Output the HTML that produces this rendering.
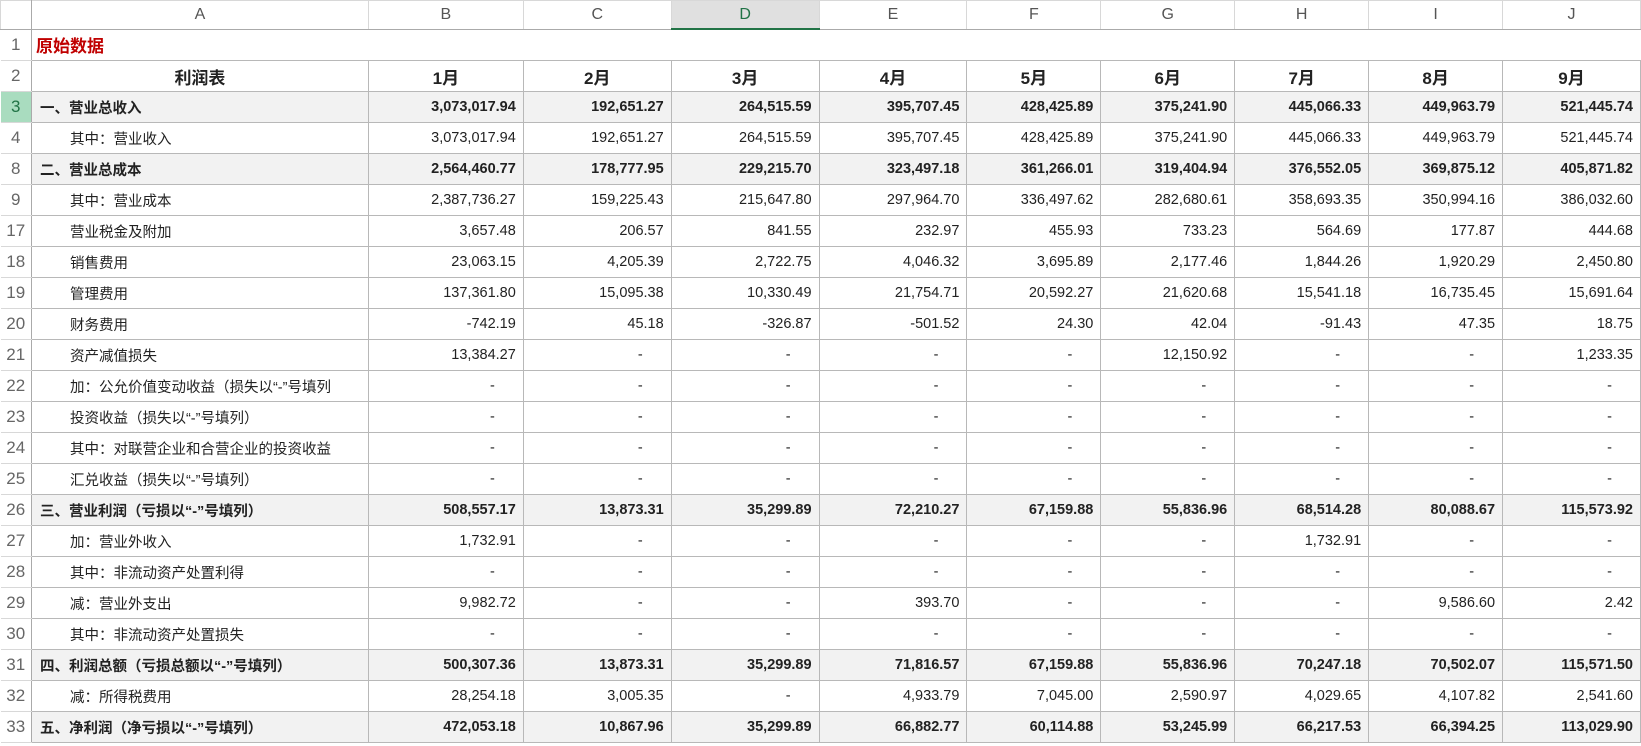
<!DOCTYPE html>
<html><head><meta charset="utf-8"><style>
body{margin:0;background:#fff;width:1641px;height:746px;overflow:hidden;font-family:"Liberation Sans","Noto Sans CJK SC",sans-serif;}
table{border-collapse:collapse;table-layout:fixed;position:absolute;left:0;top:0;}
td{height:30px;padding:0 7px 0 0;border:1px solid #b8b8b8;text-align:right;font-size:14.5px;color:#222;white-space:nowrap;overflow:hidden;}
tr.h td{height:27px;background:#fff;color:#555;text-align:center;font-size:16px;border:1px solid #d8d8d8;border-bottom:1px solid #aaa;padding:0;}
tr.h td.sel{background:#e0e0e0;border-bottom:2px solid #217346;color:#217346}
td.r{text-align:center;color:#666;font-size:17px;padding:0;border-left:none;border-color:#d8d8d8;border-right:1px solid #aaa;}
td.a{text-align:left;padding-left:38px;}
tr.b td{background:#f2f2f2;font-weight:bold;}
tr.b td.a{padding-left:8px;}
tr.b td.r{background:#fff;font-weight:normal}
td.d{padding-right:28px;}
tr.t td{border:none;border-bottom:1px solid #b8b8b8}
tr.t td.r{border-right:1px solid #aaa;border-bottom:1px solid #d8d8d8}
tr.m td{font-weight:bold;text-align:center;font-size:17px;padding:0}
tr.m td.r{font-weight:normal}
tr.g td.r{background:#a9dcbf;color:#217346}
</style></head><body>
<table>
<colgroup><col style="width:31px"><col style="width:337px"><col style="width:155px"><col style="width:148px"><col style="width:148px"><col style="width:148px"><col style="width:134px"><col style="width:134px"><col style="width:134px"><col style="width:134px"><col style="width:138px"></colgroup>
<tr class="h"><td style="border-right:1px solid #aaa"></td><td>A</td><td>B</td><td>C</td><td class="sel">D</td><td>E</td><td>F</td><td>G</td><td>H</td><td>I</td><td>J</td></tr>
<tr class="t"><td class="r">1</td><td class="a" style="padding-left:4px;color:#c00000;font-weight:bold;font-size:17px;overflow:visible">原始数据</td><td></td><td></td><td></td><td></td><td></td><td></td><td></td><td></td><td></td></tr>
<tr class="m"><td class="r">2</td><td>利润表</td><td>1月</td><td>2月</td><td>3月</td><td>4月</td><td>5月</td><td>6月</td><td>7月</td><td>8月</td><td>9月</td></tr>
<tr class="b g"><td class="r">3</td><td class="a">一、营业总收入</td><td>3,073,017.94</td><td>192,651.27</td><td>264,515.59</td><td>395,707.45</td><td>428,425.89</td><td>375,241.90</td><td>445,066.33</td><td>449,963.79</td><td>521,445.74</td></tr>
<tr><td class="r">4</td><td class="a">其中：营业收入</td><td>3,073,017.94</td><td>192,651.27</td><td>264,515.59</td><td>395,707.45</td><td>428,425.89</td><td>375,241.90</td><td>445,066.33</td><td>449,963.79</td><td>521,445.74</td></tr>
<tr class="b"><td class="r">8</td><td class="a">二、营业总成本</td><td>2,564,460.77</td><td>178,777.95</td><td>229,215.70</td><td>323,497.18</td><td>361,266.01</td><td>319,404.94</td><td>376,552.05</td><td>369,875.12</td><td>405,871.82</td></tr>
<tr><td class="r">9</td><td class="a">其中：营业成本</td><td>2,387,736.27</td><td>159,225.43</td><td>215,647.80</td><td>297,964.70</td><td>336,497.62</td><td>282,680.61</td><td>358,693.35</td><td>350,994.16</td><td>386,032.60</td></tr>
<tr><td class="r">17</td><td class="a">营业税金及附加</td><td>3,657.48</td><td>206.57</td><td>841.55</td><td>232.97</td><td>455.93</td><td>733.23</td><td>564.69</td><td>177.87</td><td>444.68</td></tr>
<tr><td class="r">18</td><td class="a">销售费用</td><td>23,063.15</td><td>4,205.39</td><td>2,722.75</td><td>4,046.32</td><td>3,695.89</td><td>2,177.46</td><td>1,844.26</td><td>1,920.29</td><td>2,450.80</td></tr>
<tr><td class="r">19</td><td class="a">管理费用</td><td>137,361.80</td><td>15,095.38</td><td>10,330.49</td><td>21,754.71</td><td>20,592.27</td><td>21,620.68</td><td>15,541.18</td><td>16,735.45</td><td>15,691.64</td></tr>
<tr><td class="r">20</td><td class="a">财务费用</td><td>-742.19</td><td>45.18</td><td>-326.87</td><td>-501.52</td><td>24.30</td><td>42.04</td><td>-91.43</td><td>47.35</td><td>18.75</td></tr>
<tr><td class="r">21</td><td class="a">资产减值损失</td><td>13,384.27</td><td class="d">-</td><td class="d">-</td><td class="d">-</td><td class="d">-</td><td>12,150.92</td><td class="d">-</td><td class="d">-</td><td>1,233.35</td></tr>
<tr><td class="r">22</td><td class="a">加：公允价值变动收益（损失以“-”号填列</td><td class="d">-</td><td class="d">-</td><td class="d">-</td><td class="d">-</td><td class="d">-</td><td class="d">-</td><td class="d">-</td><td class="d">-</td><td class="d">-</td></tr>
<tr><td class="r">23</td><td class="a">投资收益（损失以“-”号填列）</td><td class="d">-</td><td class="d">-</td><td class="d">-</td><td class="d">-</td><td class="d">-</td><td class="d">-</td><td class="d">-</td><td class="d">-</td><td class="d">-</td></tr>
<tr><td class="r">24</td><td class="a">其中：对联营企业和合营企业的投资收益</td><td class="d">-</td><td class="d">-</td><td class="d">-</td><td class="d">-</td><td class="d">-</td><td class="d">-</td><td class="d">-</td><td class="d">-</td><td class="d">-</td></tr>
<tr><td class="r">25</td><td class="a">汇兑收益（损失以“-”号填列）</td><td class="d">-</td><td class="d">-</td><td class="d">-</td><td class="d">-</td><td class="d">-</td><td class="d">-</td><td class="d">-</td><td class="d">-</td><td class="d">-</td></tr>
<tr class="b"><td class="r">26</td><td class="a">三、营业利润（亏损以“-”号填列）</td><td>508,557.17</td><td>13,873.31</td><td>35,299.89</td><td>72,210.27</td><td>67,159.88</td><td>55,836.96</td><td>68,514.28</td><td>80,088.67</td><td>115,573.92</td></tr>
<tr><td class="r">27</td><td class="a">加：营业外收入</td><td>1,732.91</td><td class="d">-</td><td class="d">-</td><td class="d">-</td><td class="d">-</td><td class="d">-</td><td>1,732.91</td><td class="d">-</td><td class="d">-</td></tr>
<tr><td class="r">28</td><td class="a">其中：非流动资产处置利得</td><td class="d">-</td><td class="d">-</td><td class="d">-</td><td class="d">-</td><td class="d">-</td><td class="d">-</td><td class="d">-</td><td class="d">-</td><td class="d">-</td></tr>
<tr><td class="r">29</td><td class="a">减：营业外支出</td><td>9,982.72</td><td class="d">-</td><td class="d">-</td><td>393.70</td><td class="d">-</td><td class="d">-</td><td class="d">-</td><td>9,586.60</td><td>2.42</td></tr>
<tr><td class="r">30</td><td class="a">其中：非流动资产处置损失</td><td class="d">-</td><td class="d">-</td><td class="d">-</td><td class="d">-</td><td class="d">-</td><td class="d">-</td><td class="d">-</td><td class="d">-</td><td class="d">-</td></tr>
<tr class="b"><td class="r">31</td><td class="a">四、利润总额（亏损总额以“-”号填列）</td><td>500,307.36</td><td>13,873.31</td><td>35,299.89</td><td>71,816.57</td><td>67,159.88</td><td>55,836.96</td><td>70,247.18</td><td>70,502.07</td><td>115,571.50</td></tr>
<tr><td class="r">32</td><td class="a">减：所得税费用</td><td>28,254.18</td><td>3,005.35</td><td class="d">-</td><td>4,933.79</td><td>7,045.00</td><td>2,590.97</td><td>4,029.65</td><td>4,107.82</td><td>2,541.60</td></tr>
<tr class="b"><td class="r">33</td><td class="a">五、净利润（净亏损以“-”号填列）</td><td>472,053.18</td><td>10,867.96</td><td>35,299.89</td><td>66,882.77</td><td>60,114.88</td><td>53,245.99</td><td>66,217.53</td><td>66,394.25</td><td>113,029.90</td></tr>
</table>
</body></html>
